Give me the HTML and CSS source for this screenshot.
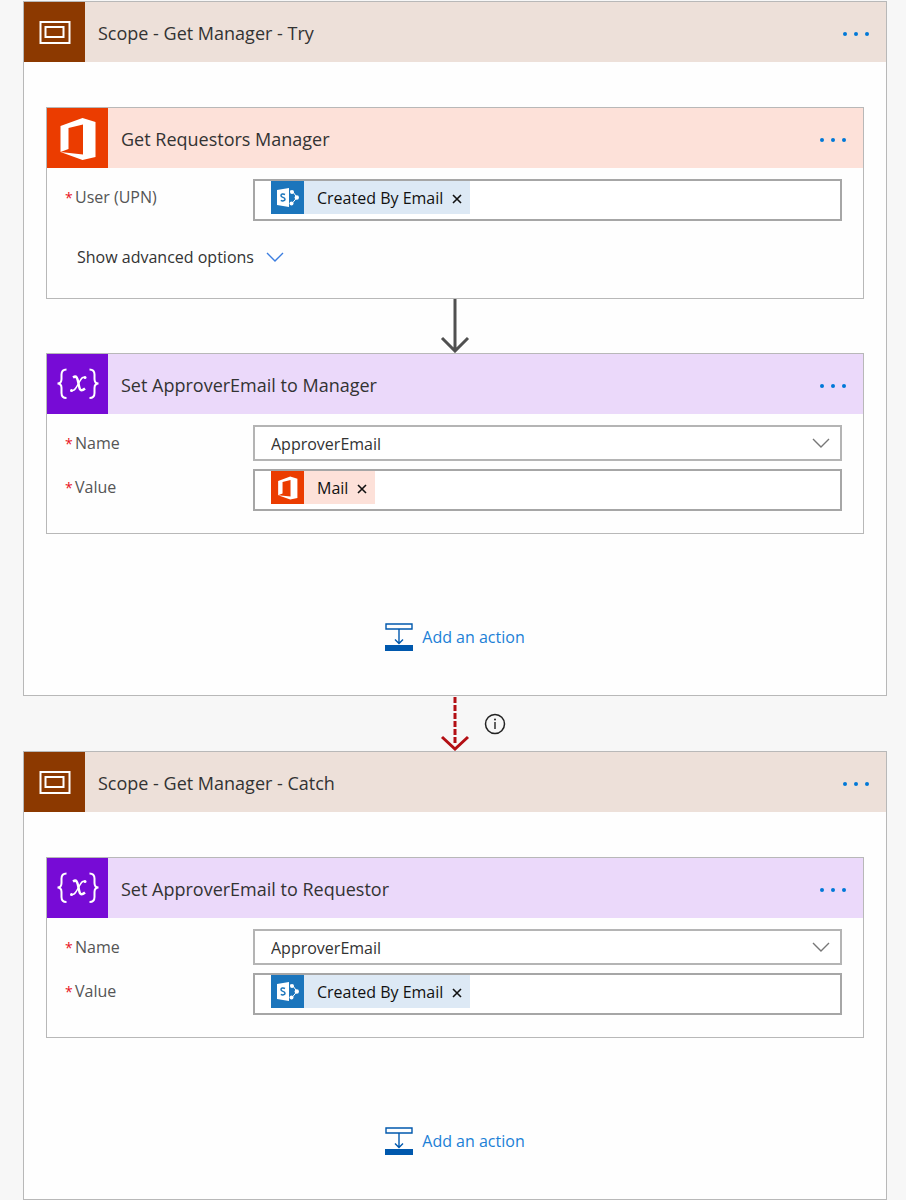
FILE: index.html
```html
<!DOCTYPE html>
<html lang="en">
<head>
  <meta charset="UTF-8">
  <meta name="viewport" content="width=device-width, initial-scale=1.0">
  <title>Get Manager flow</title>
  <link rel="stylesheet" href="styles.css">
</head>
<body>
  <!-- shared icons -->
  <svg class="sprite" aria-hidden="true">
    <symbol id="icon-scope" viewBox="0 0 60 60">
      <g fill="none" stroke="#fff" stroke-width="2">
        <rect x="16" y="20" width="29" height="21"/>
        <rect x="21" y="25" width="18" height="10"/>
      </g>
    </symbol>
    <symbol id="icon-office" viewBox="0 0 60 60">
      <path fill="#fff" d="M13 44V18L35 10L48 14V49L35 52L13 44L35.500 46.500V16.500L21 20V41Z"/>
    </symbol>
    <symbol id="icon-variable" viewBox="0 0 60 60">
      <g fill="none" stroke="#fff" stroke-width="2">
        <path d="M19 15.500C15 15.500 14 17.500 14 20.500V25C14 28 13 29.500 10 29.500C13 29.500 14 31 14 34V39C14 42 15 44 19 44"/>
        <path d="M42 15.500C46 15.500 47 17.500 47 20.500V25C47 28 48 29.500 51 29.500C48 29.500 47 31 47 34V39C47 42 46 44 42 44"/>
        <path stroke-width="2.400" d="M25.500 23.500C29 21 30 24 31 29.500C32 35.500 33 38.500 37.500 34.500"/>
        <path stroke-width="1.400" d="M37.500 23.500C34.500 22 33 26 31 29.500C28.500 34 27 37.500 24 36.500"/>
      </g>
      <circle cx="37.500" cy="23.500" r="1.500" fill="#fff"/>
      <circle cx="24" cy="36.500" r="1.500" fill="#fff"/>
    </symbol>
    <symbol id="icon-sharepoint" viewBox="0 0 33 33">
      <path fill="#fff" d="M6 9L18 7V26L6 24Z"/>
      <path fill="none" stroke="#1b75bc" stroke-width="1.500" d="M14 13.500C12 12.500 10 13 10 14.700C10 16.700 14 16 14 18.200C14 20 11.500 20.300 9.800 19.300"/>
      <path fill="none" stroke="#fff" stroke-width="1" d="M19 10L22 11L26 16.500L21 22.500L19 23"/>
      <g fill="#fff">
        <circle cx="21" cy="11" r="2"/>
        <circle cx="25.800" cy="16.500" r="2.200"/>
        <circle cx="20.500" cy="22.500" r="2"/>
      </g>
    </symbol>
    <symbol id="icon-chevron" viewBox="0 0 18 10">
      <path fill="none" stroke="currentColor" stroke-width="1.400" d="M1 1L9 9L17 1"/>
    </symbol>
    <symbol id="icon-more" viewBox="0 0 28 4">
      <g fill="currentColor">
        <circle cx="3" cy="2" r="2"/>
        <circle cx="14" cy="2" r="2"/>
        <circle cx="25" cy="2" r="2"/>
      </g>
    </symbol>
    <symbol id="icon-close" viewBox="0 0 10 10">
      <path fill="none" stroke="currentColor" stroke-width="1.600" d="M1 1L9 9M9 1L1 9"/>
    </symbol>
    <symbol id="icon-add" viewBox="0 0 28 28">
      <path fill="none" stroke="#0058ad" stroke-width="1.400" d="M1 1H27V6H1ZM14 6V20M10 16.500L14 20.500L18 16.500"/>
      <rect fill="#0058ad" y="22" width="28" height="6"/>
    </symbol>
  </svg>

  <main class="flow">
    <section class="scope">
      <header class="head head-scope">
        <svg class="head-icon"><use href="#icon-scope"/></svg>
        <h2>Scope - Get Manager - Try</h2>
        <button class="more" aria-label="Menu"><svg><use href="#icon-more"/></svg></button>
      </header>
      <div class="scope-body">
        <article class="card">
          <header class="head head-office">
            <svg class="head-icon"><use href="#icon-office"/></svg>
            <h3>Get Requestors Manager</h3>
            <button class="more" aria-label="Menu"><svg><use href="#icon-more"/></svg></button>
          </header>
          <div class="card-body">
            <div class="row">
              <label for="user"><span class="required">*</span>User (UPN)</label>
              <div class="token-box">
                <span class="token token-sharepoint">
                  <svg class="token-icon"><use href="#icon-sharepoint"/></svg>
                  Created By Email
                  <button class="remove" aria-label="Remove"><svg><use href="#icon-close"/></svg></button>
                </span>
                <input type="text" id="user">
              </div>
            </div>
            <button class="advanced">Show advanced options <svg><use href="#icon-chevron"/></svg></button>
          </div>
        </article>

        <svg class="arrow" viewBox="0 0 30 54">
          <path d="M15 0V51M2 39L15 52L28 39"/>
        </svg>

        <article class="card">
          <header class="head head-variable">
            <svg class="head-icon"><use href="#icon-variable"/></svg>
            <h3>Set ApproverEmail to Manager</h3>
            <button class="more" aria-label="Menu"><svg><use href="#icon-more"/></svg></button>
          </header>
          <div class="card-body">
            <div class="row">
              <label for="name-try"><span class="required">*</span>Name</label>
              <div class="select-box">
                <select id="name-try"><option>ApproverEmail</option></select>
                <svg><use href="#icon-chevron"/></svg>
              </div>
            </div>
            <div class="row">
              <label for="value-try"><span class="required">*</span>Value</label>
              <div class="token-box">
                <span class="token token-office">
                  <svg class="token-icon"><use href="#icon-office"/></svg>
                  Mail
                  <button class="remove" aria-label="Remove"><svg><use href="#icon-close"/></svg></button>
                </span>
                <input type="text" id="value-try">
              </div>
            </div>
          </div>
        </article>

        <button class="add"><svg><use href="#icon-add"/></svg>Add an action</button>
      </div>
    </section>

    <div class="run-after">
      <svg class="arrow arrow-failed" viewBox="0 0 30 54">
        <path class="dashes" d="M15 0V48"/>
        <path d="M2 40L15 52L28 40"/>
      </svg>
      <button class="info" aria-label="Run after details">
        <svg viewBox="0 0 22 22">
          <circle cx="11" cy="11" r="9.500" fill="none" stroke="#222" stroke-width="1.500"/>
          <path d="M11 9V16" stroke="#222" stroke-width="1.400"/>
          <circle cx="11" cy="6.500" r="1" fill="#222"/>
        </svg>
      </button>
    </div>

    <section class="scope">
      <header class="head head-scope">
        <svg class="head-icon"><use href="#icon-scope"/></svg>
        <h2>Scope - Get Manager - Catch</h2>
        <button class="more" aria-label="Menu"><svg><use href="#icon-more"/></svg></button>
      </header>
      <div class="scope-body">
        <article class="card">
          <header class="head head-variable">
            <svg class="head-icon"><use href="#icon-variable"/></svg>
            <h3>Set ApproverEmail to Requestor</h3>
            <button class="more" aria-label="Menu"><svg><use href="#icon-more"/></svg></button>
          </header>
          <div class="card-body">
            <div class="row">
              <label for="name-catch"><span class="required">*</span>Name</label>
              <div class="select-box">
                <select id="name-catch"><option>ApproverEmail</option></select>
                <svg><use href="#icon-chevron"/></svg>
              </div>
            </div>
            <div class="row">
              <label for="value-catch"><span class="required">*</span>Value</label>
              <div class="token-box">
                <span class="token token-sharepoint">
                  <svg class="token-icon"><use href="#icon-sharepoint"/></svg>
                  Created By Email
                  <button class="remove" aria-label="Remove"><svg><use href="#icon-close"/></svg></button>
                </span>
                <input type="text" id="value-catch">
              </div>
            </div>
          </div>
        </article>

        <button class="add"><svg><use href="#icon-add"/></svg>Add an action</button>
      </div>
    </section>
  </main>
</body>
</html>
```
FILE: styles.css
```css
* {
  box-sizing: border-box;
}

body {
  margin: 0;
  background-color: #f7f7f7;
  color: #333;
  font-family: "Segoe UI", "Open Sans", "Noto Sans", sans-serif;
  font-size: 16px;
  line-height: 24px;
}

button,
input,
select {
  font: inherit;
  color: inherit;
  border: none;
  background: none;
  padding: 0;
  margin: 0;
}

button {
  cursor: pointer;
}

svg {
  display: block;
  flex: none;
}

.sprite {
  position: absolute;
  width: 0;
  height: 0;
}

.flow {
  padding: 1px 19px 0 23px;
}

.scope {
  border: 1px solid #b8b8b8;
  background-color: #fefefe;
}

.scope-body {
  display: flex;
  flex-direction: column;
  padding: 45px 22px 41px;
}

/* headers */
.head {
  display: flex;
  align-items: center;
  height: 60px;
  padding-right: 15px;
}

.head h2,
.head h3 {
  flex: 1;
  margin: 0 0 0 13px;
  padding-top: 2px;
  font-size: 18px;
  font-weight: 400;
}

.head-icon {
  width: 61px;
  height: 60px;
}

.head-scope {
  background-color: #ede0d9;
}

.head-scope .head-icon {
  background-color: #8c3900;
}

.head-office {
  background-color: #fde1d9;
}

.head-office .head-icon {
  background-color: #eb3c00;
}

.head-variable {
  background-color: #ebd9fa;
}

.head-variable .head-icon {
  background-color: #770bd6;
}

.more {
  padding: 13px 0 10px;
  color: #0078d7;
}

.more svg {
  width: 30px;
  height: 4px;
}

/* action cards */
.card {
  border: 1px solid #b8b8b8;
}

.card-body {
  display: flex;
  flex-direction: column;
  gap: 8px;
  padding: 11px 21px 22px 18px;
}

.row {
  display: flex;
}

.row label {
  flex: none;
  width: 188px;
  padding-top: 6px;
  color: #555;
}

.required {
  display: inline-block;
  width: 10px;
  color: #e81123;
  font-size: 14px;
}

.token-box,
.select-box {
  flex: 1;
  display: flex;
  border: 2px solid #a6a6a6;
  background-color: #fff;
}

.token-box {
  height: 42px;
  padding-left: 16px;
}

.token-box input {
  flex: 1;
  min-width: 0;
  outline: none;
}

.token {
  display: flex;
  align-items: center;
  height: 33px;
  padding-right: 8px;
  color: #111;
}

.token-icon {
  width: 33px;
  height: 33px;
  margin-right: 13px;
}

.token-sharepoint {
  background-color: #dde9f5;
}

.token-sharepoint .token-icon {
  background-color: #1b75bc;
}

.token-office {
  background-color: #fde1d9;
}

.token-office .token-icon {
  background-color: #eb3c00;
}

.remove {
  margin-left: 9px;
  padding-top: 2px;
}

.remove svg {
  width: 10px;
  height: 10px;
}

.select-box {
  align-items: center;
  height: 36px;
  padding-right: 10px;
  border-color: #b4b4b4;
}

.select-box select {
  flex: 1;
  padding: 2px 0 0 16px;
  appearance: none;
}

.select-box svg {
  width: 18px;
  height: 10px;
  color: #777;
}

.advanced {
  display: flex;
  align-items: center;
  align-self: flex-start;
  gap: 12px;
  margin: 16px 0 7px 12px;
}

.advanced svg {
  width: 18px;
  height: 10px;
  color: #3b7de0;
}

/* connectors */
.arrow {
  align-self: center;
  width: 30px;
  height: 54px;
  fill: none;
  stroke: #505050;
  stroke-width: 3;
}

.arrow-failed {
  grid-column: 2;
  stroke: #b30f14;
}

.dashes {
  stroke-dasharray: 6 2;
}

.run-after {
  display: grid;
  grid-template-columns: 1fr 30px 1fr;
  align-items: center;
  height: 55px;
}

.info {
  justify-self: start;
  margin-left: 14px;
}

.info svg {
  width: 22px;
  height: 22px;
}

.add {
  display: flex;
  align-items: center;
  align-self: center;
  gap: 9px;
  height: 34px;
  margin-top: 86px;
  color: #1b80d6;
}

.add svg {
  width: 28px;
  height: 28px;
}
```
